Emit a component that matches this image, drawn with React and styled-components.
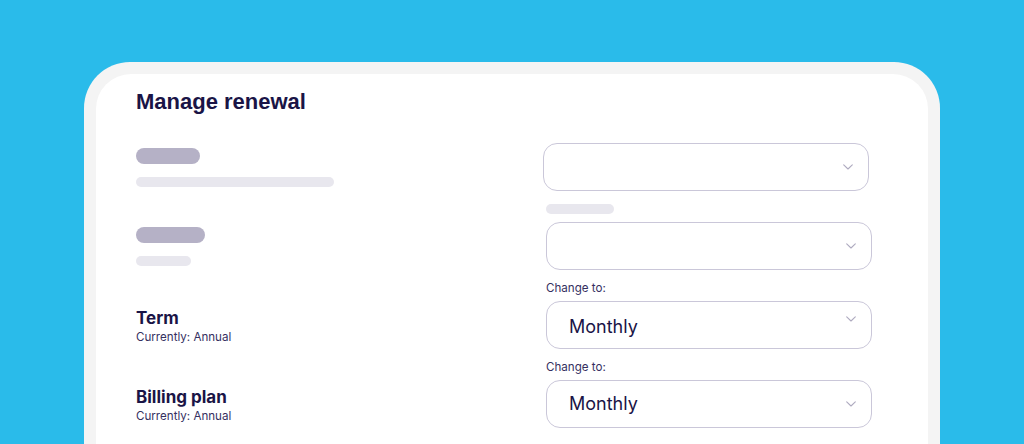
import React from "react";
import styled, { createGlobalStyle } from "styled-components";

const GlobalStyle = createGlobalStyle`
  * {
    box-sizing: border-box;
  }
  body {
    margin: 0;
    font-family: "Inter", "Noto Sans", sans-serif;
  }
`;

const Page = styled.div`
  width: 1024px;
  height: 444px;
  overflow: hidden;
  background: #2abbea;
  padding: 62px 84px 0 84px;
`;

const Frame = styled.div`
  background: #f4f4f4;
  border-radius: 46px 46px 0 0;
  padding: 12px 12px 0 12px;
  min-height: 480px;
`;

const Card = styled.div`
  background: #ffffff;
  border-radius: 35px 35px 0 0;
  padding: 15px 56px 40px 40px;
  min-height: 468px;
`;

const Title = styled.h1`
  margin: 0 0 28px 0;
  font-family: "Liberation Sans", Arial, sans-serif;
  font-weight: 700;
  font-size: 22px;
  line-height: 26px;
  color: #1a1446;
`;

const Rows = styled.div`
  display: flex;
  flex-direction: column;
  gap: 10px;
`;

const Row = styled.div`
  display: grid;
  grid-template-columns: 1fr 326px;
  align-items: end;
`;

const Info = styled.div`
  display: flex;
  flex-direction: column;
  align-items: flex-start;
  padding-bottom: 4px;
`;

const Pill = styled.div`
  width: ${(p) => p.$width}px;
  height: 16px;
  border-radius: 8px;
  background: #b5b1c6;
`;

const Bar = styled.div`
  width: ${(p) => p.$width}px;
  height: 10px;
  border-radius: 5px;
  background: #e8e7ee;
  margin-top: ${(p) => p.$gap || 0}px;
`;

const Heading = styled.div`
  font-weight: 700;
  font-size: 17px;
  line-height: 21px;
  color: #1a1446;
`;

const Current = styled.div`
  font-size: 11.6px;
  line-height: 16px;
  color: #35305f;
`;

const Field = styled.div`
  display: flex;
  flex-direction: column;
`;

const Label = styled.div`
  height: 16px;
  margin-bottom: 5px;
  display: flex;
  align-items: center;
  font-size: 11.6px;
  line-height: 16px;
  color: #35305f;
`;

const Select = styled.div`
  height: 48px;
  margin: 0 ${(p) => -(p.$shift || 0)}px 0 ${(p) => p.$shift || 0}px;
  border: 1px solid #cac7d9;
  border-radius: 14px;
  background: #ffffff;
  display: flex;
  align-items: center;
  padding: 0 15px 0 22px;
`;

const Value = styled.span`
  flex: 1;
  padding-top: ${(p) => p.$drop || 0}px;
  font-size: 18px;
  line-height: 22px;
  color: #1a1446;
`;

const Chevron = styled.svg`
  width: 10px;
  height: 6px;
  margin-top: ${(p) => p.$lift || 0}px;
  flex-shrink: 0;
`;

function Arrow({ lift }) {
  return (
    <Chevron $lift={lift} viewBox="0 0 10 6" fill="none">
      <path
        d="M0.7 0.8L5 5L9.3 0.8"
        stroke="#aeaabf"
        strokeWidth="1.1"
        strokeLinecap="round"
        strokeLinejoin="round"
      />
    </Chevron>
  );
}

export default function App() {
  return (
    <>
      <GlobalStyle />
      <Page>
        <Frame>
          <Card>
            <Title>Manage renewal</Title>
            <Rows>
              <Row>
                <Info>
                  <Pill $width={64} />
                  <Bar $width={198} $gap={13} />
                </Info>
                <Field>
                  <Select $shift={-3}>
                    <Value />
                    <Arrow />
                  </Select>
                </Field>
              </Row>

              <Row>
                <Info>
                  <Pill $width={69} />
                  <Bar $width={55} $gap={13} />
                </Info>
                <Field>
                  <Label>
                    <Bar $width={68} />
                  </Label>
                  <Select>
                    <Value />
                    <Arrow />
                  </Select>
                </Field>
              </Row>

              <Row>
                <Info>
                  <Heading>Term</Heading>
                  <Current>Currently: Annual</Current>
                </Info>
                <Field>
                  <Label>Change to:</Label>
                  <Select>
                    <Value $drop={4}>Monthly</Value>
                    <Arrow lift={-12} />
                  </Select>
                </Field>
              </Row>

              <Row>
                <Info>
                  <Heading>Billing plan</Heading>
                  <Current>Currently: Annual</Current>
                </Info>
                <Field>
                  <Label>Change to:</Label>
                  <Select>
                    <Value>Monthly</Value>
                    <Arrow />
                  </Select>
                </Field>
              </Row>
            </Rows>
          </Card>
        </Frame>
      </Page>
    </>
  );
}
